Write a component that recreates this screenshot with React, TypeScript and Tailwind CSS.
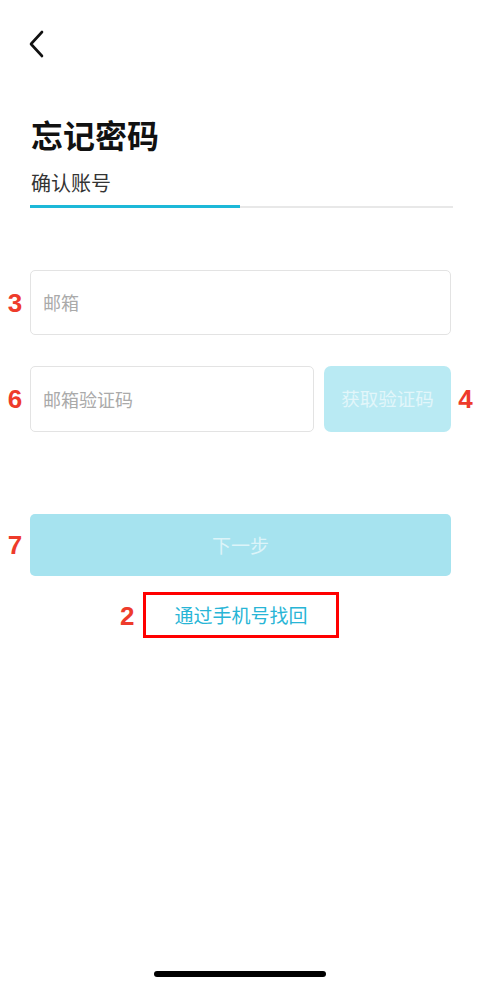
import React from "react";

const cjk = { fontFamily: '"Noto Sans CJK SC", "Noto Sans", sans-serif' };
const num = { fontFamily: '"Liberation Sans", Arial, sans-serif' };

function Mark({ n }: { n: string }) {
  return (
    <span className="text-[26px] font-bold leading-none text-[#ee3b2b]" style={num}>
      {n}
    </span>
  );
}

export default function App() {
  return (
    <div className="relative flex min-h-[986px] w-[480px] flex-col bg-white" style={cjk}>
      <div className="flex h-[88px] items-start pl-[27px] pt-[30px]">
        <svg width="20" height="28" viewBox="0 0 20 28" fill="none">
          <path d="M15 2 L4 14 L15 26" stroke="#111" strokeWidth="2.6" strokeLinecap="round" strokeLinejoin="round" />
        </svg>
      </div>

      <div className="px-[30px]">
        <h1 className="text-[32px] font-bold leading-[38px] text-[#111] mt-[27px] ml-[1px]">忘记密码</h1>
        <div className="mt-[18px] text-[20px] leading-[24px] text-[#333] ml-[1px]">确认账号</div>
        <div className="mt-[10px] flex w-[423px] items-end">
          <div className="h-[3px] w-[210px] bg-[#1cb8d8]" />
          <div className="h-[2px] flex-1 bg-[#e8e8e8]" />
        </div>
      </div>

      <div className="mt-[62px] flex items-center">
        <div className="flex w-[30px] justify-center">
          <Mark n="3" />
        </div>
        <div className="flex h-[65px] w-[421px] items-center rounded-[5px] border border-[#e3e3e3] pl-[12px] text-[18px] text-[#aaa]">
          邮箱
        </div>
      </div>

      <div className="mt-[31px] flex items-center">
        <div className="flex w-[30px] justify-center">
          <Mark n="6" />
        </div>
        <div className="flex h-[66px] w-[284px] items-center rounded-[5px] border border-[#e3e3e3] pl-[12px] text-[18px] text-[#aaa]">
          邮箱验证码
        </div>
        <div className="ml-[10px] flex h-[66px] w-[127px] items-center justify-center rounded-[7px] bg-[#b9eaf3] text-[18.5px] text-[#e2f6fa]">
          获取验证码
        </div>
        <div className="flex flex-1 justify-center">
          <Mark n="4" />
        </div>
      </div>

      <div className="mt-[82px] flex items-center">
        <div className="flex w-[30px] justify-center">
          <Mark n="7" />
        </div>
        <div className="flex h-[62px] w-[421px] items-center justify-center rounded-[5px] bg-[#a6e3ef] text-[19px] text-[#dcf4f9]">
          下一步
        </div>
      </div>

      <div className="mt-[16px] flex justify-center">
        <div className="relative ml-[2px] flex h-[46px] w-[196px] items-center justify-center border-[3px] border-[#ff0000] text-[19px] text-[#28b5d6]">
          通过手机号找回
          <span className="absolute left-[-26px] top-[8px]">
            <Mark n="2" />
          </span>
        </div>
      </div>

      <div className="flex-1" />
      <div className="flex justify-center pb-[9px]">
        <div className="h-[6px] w-[172px] rounded-full bg-black" />
      </div>
    </div>
  );
}
